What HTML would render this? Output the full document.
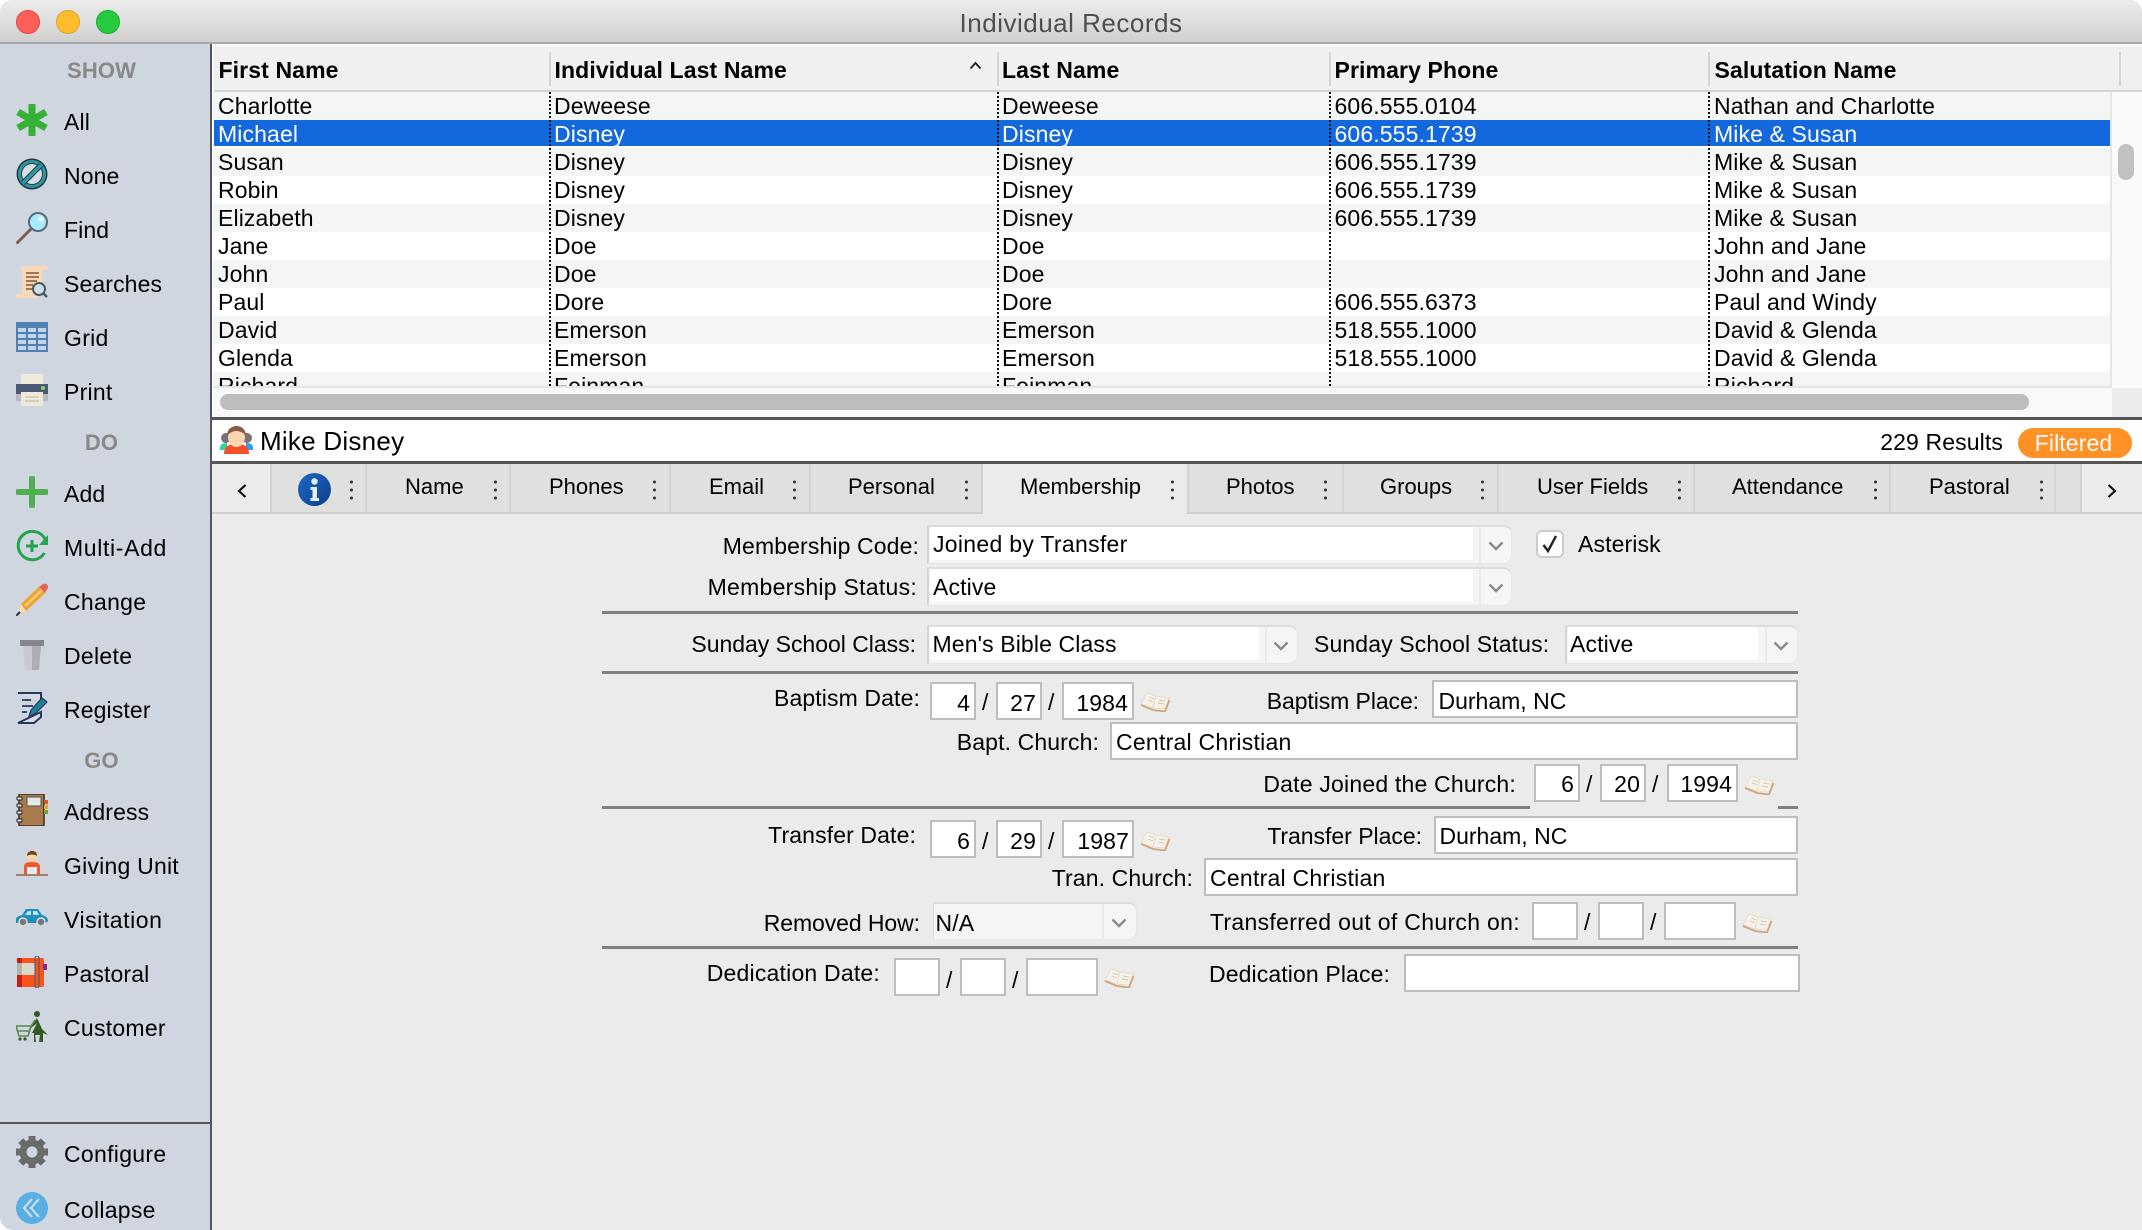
<!DOCTYPE html>
<html><head><meta charset="utf-8"><title>Individual Records</title>
<style>
html,body{margin:0;padding:0;background:#fff}
body{width:2142px;height:1230px;position:relative;overflow:hidden;font-family:"Liberation Sans",sans-serif;font-size:23px;color:#000;letter-spacing:.12px}
div,span,svg{position:absolute;box-sizing:border-box}
.t{white-space:nowrap;line-height:28px;height:28px}
.sh{width:212px;left:0;text-align:center;padding-right:9px;font-weight:700;font-size:22px;color:#888;line-height:28px;height:28px}
.row{left:214px;width:1896px;height:28px;line-height:28px;white-space:nowrap;overflow:hidden}
.row span{top:0}
.g{background:#f4f6f5}.w{background:#fff}
.sel{background:#1368dd;color:#fff;height:26px}
.c1{left:4px}.c2{left:340px}.c3{left:788px}.c4{left:1120.500px}.c5{left:1500px}
.hd{top:56px;line-height:28px;font-weight:700;white-space:nowrap}
.vd{top:52px;height:34px;width:2px;background:#d5d5d5}
.dt{top:92px;height:294px;width:2px;background:repeating-linear-gradient(#111 0 2px,transparent 2px 4px);z-index:3}
.tab{top:464px;height:48px;background:#e0e0e0;border-right:2px solid #d2d2d2}
.tt{top:472px;font-size:22px;line-height:28px;white-space:nowrap;letter-spacing:0}
.dots{top:478px;width:3px;height:24px;background:radial-gradient(circle,#333 1.3px,transparent 1.7px) 0 0/3px 8px repeat-y}
.inp{background:#fff;border:2px solid #bdbdbd}
.hl{left:602px;width:1196px;height:3px;background:#808080}
.combo{background:#f5f5f5;border-top:2px solid #ddd;border-left:2px solid #d4d4d4;border-right:1px solid #e6e6e6;border-bottom:1px solid #e6e6e6;border-radius:0 9px 9px 0}
.in{background:#fff}
.sep{width:2px;background:#eaeaea}
</style></head>
<body>
<svg width="0" height="0" style="left:0;top:0"><defs><symbol id="bk" viewBox="0 0 30 20"><path d="M1 12L7 1L16 4L13 16Z" fill="#f6f2e8" stroke="#e3dacb" stroke-width=".8"/><path d="M16 4L29 6L25 17L13 16Z" fill="#f6f2e8" stroke="#e3dacb" stroke-width=".8"/><path d="M9 5L14 7M8 8L13 10M19 8L25 9M18 11L24 12" stroke="#cfc8ba" stroke-width=".9"/><path d="M1 13L13 18L25 19.500L29.500 8" fill="none" stroke="#cfa67f" stroke-width="1.800"/></symbol></defs></svg>
<!-- window bg -->
<div style="left:0;top:0;width:2142px;height:1230px;background:#ebebeb;border-radius:12px 12px 0 12px;overflow:hidden"></div>
<!-- title -->
<div style="left:0;top:0;width:2142px;height:44px;background:linear-gradient(#ececec,#d0d0d0);border-bottom:2px solid #aaa;border-radius:12px 12px 0 0"></div>
<div style="left:16px;top:10px;width:24px;height:24px;border-radius:50%;background:#ff5f57;border:1px solid #e0443e"></div>
<div style="left:56px;top:10px;width:24px;height:24px;border-radius:50%;background:#ffbd2e;border:1px solid #dea123"></div>
<div style="left:96px;top:10px;width:24px;height:24px;border-radius:50%;background:#27c93f;border:1px solid #1aab29"></div>
<div class="t" style="left:0;width:2142px;text-align:center;top:9px;font-size:26px;color:#4e4e4e;letter-spacing:.5px">Individual Records</div>

<!-- sidebar -->
<div style="left:0;top:44px;width:212px;height:1186px;background:#cfd6df;border-right:2px solid #555;border-radius:0 0 0 14px"></div>
<div class="sh" style="top:56.500px">SHOW</div>
<div class="sh" style="top:428.500px">DO</div>
<div class="sh" style="top:746.500px">GO</div>
<div style="left:0;top:1122px;width:210px;height:2px;background:#555"></div>
<div class="t" style="left:64px;top:108px">All</div>
<div class="t" style="left:64px;top:162px">None</div>
<div class="t" style="left:64px;top:216px">Find</div>
<div class="t" style="left:64px;top:270px">Searches</div>
<div class="t" style="left:64px;top:324px;letter-spacing:.3px">Grid</div>
<div class="t" style="left:64px;top:378px;letter-spacing:.25px">Print</div>
<div class="t" style="left:64px;top:480px">Add</div>
<div class="t" style="left:64px;top:534px;letter-spacing:.65px">Multi-Add</div>
<div class="t" style="left:64px;top:588px;letter-spacing:.3px">Change</div>
<div class="t" style="left:64px;top:642px;letter-spacing:.3px">Delete</div>
<div class="t" style="left:64px;top:696px">Register</div>
<div class="t" style="left:64px;top:798px">Address</div>
<div class="t" style="left:64px;top:852px;letter-spacing:.22px">Giving Unit</div>
<div class="t" style="left:64px;top:906px;letter-spacing:.55px">Visitation</div>
<div class="t" style="left:64px;top:960px">Pastoral</div>
<div class="t" style="left:64px;top:1014px;letter-spacing:.27px">Customer</div>
<div class="t" style="left:64px;top:1140px;letter-spacing:.3px">Configure</div>
<div class="t" style="left:64px;top:1196px;letter-spacing:.27px">Collapse</div>

<!-- All -->
<svg style="left:16px;top:104px" width="32" height="32" viewBox="0 0 32 32"><path d="M16 0V32M2 8L30 24M2 24L30 8" stroke="#36b036" stroke-width="7"/></svg>
<!-- None -->
<svg style="left:16px;top:158px" width="32" height="32" viewBox="0 0 32 32"><circle cx="16" cy="16" r="15.500" fill="#1f3c44"/><circle cx="16" cy="16" r="14" fill="#2d96a3"/><circle cx="16" cy="16" r="11" fill="#1f3c44"/><circle cx="16" cy="16" r="10" fill="#d6dde3"/><path d="M7 25L25 7" stroke="#1f3c44" stroke-width="5.500"/><path d="M7 25L25 7" stroke="#2d96a3" stroke-width="3.500"/></svg>
<!-- Find -->
<svg style="left:16px;top:212px" width="32" height="32" viewBox="0 0 32 32"><path d="M1.500 30.500L15 17" stroke="#7d5a56" stroke-width="3" stroke-linecap="round"/><circle cx="22" cy="10" r="9" fill="#a7ecfc" stroke="#596a7a" stroke-width="2"/><circle cx="25" cy="7" r="2.500" fill="#fff"/></svg>
<!-- Searches -->
<svg style="left:16px;top:266px" width="32" height="32" viewBox="0 0 32 32"><path d="M6 0H32V4H26V26C24 30 22 32 20 32H0V28H6Z" fill="#f6d9b5"/><path d="M10 7H23M10 11H23M10 15H21M10 19H17M10 23H16" stroke="#8a5238" stroke-width="1.600"/><circle cx="23" cy="23" r="6" fill="#cfe0ea" stroke="#4c5a64" stroke-width="2"/><path d="M27 27L31 31" stroke="#4c5a64" stroke-width="2.400"/></svg>
<!-- Grid -->
<svg style="left:16px;top:322px" width="32" height="30" viewBox="0 0 32 30"><rect width="32" height="30" fill="#5180b5"/><g fill="#c3d4e6"><rect x="2" y="6" width="8" height="4"/><rect x="12" y="6" width="8" height="4"/><rect x="22" y="6" width="8" height="4"/><rect x="2" y="12" width="8" height="4"/><rect x="12" y="12" width="8" height="4"/><rect x="22" y="12" width="8" height="4"/><rect x="2" y="18" width="8" height="4"/><rect x="12" y="18" width="8" height="4"/><rect x="22" y="18" width="8" height="4"/><rect x="2" y="24" width="8" height="4"/><rect x="12" y="24" width="8" height="4"/><rect x="22" y="24" width="8" height="4"/></g></svg>
<!-- Print -->
<svg style="left:16px;top:374px" width="32" height="32" viewBox="0 0 32 32"><rect x="5" y="0" width="22" height="11" fill="#efe9da"/><rect x="0" y="10" width="32" height="10" fill="#4c5a74"/><rect x="0" y="20" width="32" height="7" fill="#b4bac2"/><rect x="5" y="18" width="22" height="14" fill="#efe9da"/><path d="M9 23H23M9 27H23" stroke="#cfc7b0" stroke-width="1.400"/><circle cx="27" cy="14" r="2" fill="#8fd070"/></svg>
<!-- Add -->
<svg style="left:16px;top:476px" width="32" height="32" viewBox="0 0 32 32"><path d="M16 2V30M2 16H30" stroke="#4fae50" stroke-width="6" stroke-linecap="round"/></svg>
<!-- Multi-Add -->
<svg style="left:16px;top:530px" width="32" height="32" viewBox="0 0 32 32"><path d="M29 9A14.200 14.200 0 1 0 28.500 23" fill="none" stroke="#23a34e" stroke-width="3"/><path d="M32 5V15H23Z" fill="#23a34e"/><path d="M16 10V22M10 16H22" stroke="#23a34e" stroke-width="3"/></svg>
<!-- Change -->
<svg style="left:16px;top:583px" width="32" height="33" viewBox="0 0 32 33"><path d="M5 21L23 4L29 10L10 28L2 31Z" fill="#f3a128"/><path d="M9 23L26 7" stroke="#fad07d" stroke-width="2.500"/><path d="M23 4L27 1C29 0 31 1 32 3C32 5 32 6 30 8L29 10Z" fill="#e0665a"/><path d="M5 21L10 28L2 31Z" fill="#f3e0b8"/><path d="M0 33L4 29" stroke="#333" stroke-width="2"/></svg>
<!-- Delete -->
<svg style="left:20px;top:638px" width="24" height="32" viewBox="0 0 24 32"><path d="M3 8H21L19 32H5Z" fill="#c9c9cf"/><path d="M12 8H21L19 32H12Z" fill="#aeadb3"/><rect x="0" y="2" width="24" height="6" fill="#85858c"/></svg>
<!-- Register -->
<svg style="left:16px;top:692px" width="32" height="32" viewBox="0 0 32 32"><path d="M2 1H25V8M25 20V25L18 31H2Z" fill="#d6dde5" stroke="#28395c" stroke-width="2"/><path d="M6 8H15M6 14H17M6 20H11" stroke="#28395c" stroke-width="1.800"/><path d="M13 24L15 18L26 6L31 10L19 22Z" fill="#1d7f96" stroke="#28395c" stroke-width="1.200"/></svg>
<!-- Address -->
<svg style="left:16px;top:794px" width="32" height="32" viewBox="0 0 32 32"><rect x="3" y="0" width="25" height="32" rx="1" fill="#a97a4c" stroke="#3a2c20" stroke-width="1.500"/><rect x="11" y="3" width="14" height="9" fill="#e6e8e8" stroke="#555" stroke-width="1"/><g fill="#fff" stroke="#333" stroke-width="1.200"><rect x="1" y="3" width="5" height="3" rx="1"/><rect x="1" y="10" width="5" height="3" rx="1"/><rect x="1" y="17" width="5" height="3" rx="1"/><rect x="1" y="25" width="5" height="3" rx="1"/></g><rect x="28" y="6" width="4" height="4" fill="#d8582c"/><rect x="28" y="11" width="4" height="4" fill="#e8a42c"/><rect x="28" y="16" width="4" height="4" fill="#70a33a"/></svg>
<!-- Giving -->
<svg style="left:16px;top:851px" width="32" height="26" viewBox="0 0 32 26"><path d="M8 23V16C8 12 11 11 16 11C21 11 24 12 24 16V23Z" fill="#ef5a2a"/><circle cx="16" cy="6" r="5" fill="#fcd3a6"/><path d="M11 5C11 1 14 0 16 0C19 0 21 1 21 5C18 3 14 3 11 5Z" fill="#6b4326"/><rect x="11" y="16" width="10" height="7" fill="#e8e8ee"/><rect x="0" y="23" width="32" height="2" fill="#a67c6c"/></svg>
<!-- Visitation -->
<svg style="left:16px;top:909px" width="32" height="18" viewBox="0 0 32 18"><path d="M0 10C0 8 3 7 6 6L10 0H22L26 6C29 7 32 8 32 12L30 14H0Z" fill="#1e8fbb"/><path d="M9 6L12 2H15V6ZM17 2H21L23 6H17Z" fill="#bde6f4"/><circle cx="7" cy="13" r="4" fill="#777" stroke="#ddd" stroke-width="1.500"/><circle cx="25" cy="13" r="4" fill="#777" stroke="#ddd" stroke-width="1.500"/></svg>
<!-- Pastoral -->
<svg style="left:17px;top:956px" width="31" height="32" viewBox="0 0 31 32"><rect x="0" y="2" width="27" height="29" rx="2" fill="#f9541c"/><rect x="0" y="19" width="5" height="12" fill="#c41f12"/><rect x="0" y="2" width="5" height="5" fill="#c41f12"/><rect x="0" y="7" width="5" height="12" fill="#b5b5ae"/><rect x="5" y="7" width="13" height="12" fill="#dcd8cc"/><rect x="18" y="0" width="4" height="32" rx="2" fill="none" stroke="#3c5a70" stroke-width="1"/><rect x="26" y="8" width="4" height="6" fill="#8b2a88"/></svg>
<!-- Customer -->
<svg style="left:16px;top:1011px" width="32" height="31" viewBox="0 0 32 31"><circle cx="21" cy="3" r="3" fill="#2f5a24"/><path d="M21 7L26 18L32 24L27 22V31H23L24 24H19L20 31H18V22L16 22L21 12L14 18Z" fill="#2f5a24"/><path d="M0 15H15L12 25H3Z" fill="none" stroke="#5a8a50" stroke-width="1.600"/><path d="M2 20H13M15 15L19 9" stroke="#5a8a50" stroke-width="1.400"/><circle cx="4" cy="28" r="1.600" fill="#2f5a24"/><circle cx="9" cy="28" r="1.600" fill="#2f5a24"/></svg>
<!-- Configure -->
<svg style="left:16px;top:1136px" width="32" height="32" viewBox="0 0 32 32"><path d="M16 5V0M16 32V27M5 16H0M32 16H27M8.200 8.200L4.700 4.700M27.300 27.300L23.800 23.800M8.200 23.800L4.700 27.300M27.300 4.700L23.800 8.200" stroke="#6b6b6b" stroke-width="7"/><circle cx="16" cy="16" r="9" fill="none" stroke="#6b6b6b" stroke-width="7"/></svg>
<!-- Collapse -->
<svg style="left:16px;top:1192px" width="32" height="32" viewBox="0 0 32 32"><circle cx="16" cy="16" r="16" fill="#59aee3"/><path d="M16 7L8 16L16 25M23 7L15 16L23 25" fill="none" stroke="#cfe6f6" stroke-width="2"/></svg>

<!-- table -->
<div style="left:212px;top:44px;width:1930px;height:373px;background:#fafafa"></div>
<div style="left:214px;top:46px;width:1928px;height:44px;background:#f0f0f0"></div>
<div style="left:214px;top:90px;width:1928px;height:2px;background:#d4d4d4"></div>
<div class="hd" style="left:218.500px">First Name</div>
<div class="hd" style="left:554.500px">Individual Last Name</div>
<div class="hd" style="left:1002px">Last Name</div>
<div class="hd" style="left:1334.500px">Primary Phone</div>
<div class="hd" style="left:1714.500px">Salutation Name</div>
<div class="vd" style="left:549px"></div><div class="vd" style="left:997px"></div><div class="vd" style="left:1329px"></div><div class="vd" style="left:1708px"></div><div class="vd" style="left:2119px"></div>
<svg style="left:969px;top:61px" width="13" height="9" viewBox="0 0 13 9"><path d="M1.500 7.500L6.500 2L11.500 7.500" fill="none" stroke="#222" stroke-width="1.800"/></svg>

<div class="row g" style="top:92px"><span class="c1">Charlotte</span><span class="c2">Deweese</span><span class="c3">Deweese</span><span class="c4">606.555.0104</span><span class="c5">Nathan and Charlotte</span></div>
<div class="row w" style="top:120px"></div>
<div class="row sel" style="top:120px;line-height:28px"><span class="c1">Michael</span><span class="c2">Disney</span><span class="c3">Disney</span><span class="c4">606.555.1739</span><span class="c5">Mike &amp; Susan</span></div>
<div class="row g" style="top:148px"><span class="c1">Susan</span><span class="c2">Disney</span><span class="c3">Disney</span><span class="c4">606.555.1739</span><span class="c5">Mike &amp; Susan</span></div>
<div class="row w" style="top:176px"><span class="c1">Robin</span><span class="c2">Disney</span><span class="c3">Disney</span><span class="c4">606.555.1739</span><span class="c5">Mike &amp; Susan</span></div>
<div class="row g" style="top:204px"><span class="c1">Elizabeth</span><span class="c2">Disney</span><span class="c3">Disney</span><span class="c4">606.555.1739</span><span class="c5">Mike &amp; Susan</span></div>
<div class="row w" style="top:232px"><span class="c1">Jane</span><span class="c2">Doe</span><span class="c3">Doe</span><span class="c5">John and Jane</span></div>
<div class="row g" style="top:260px"><span class="c1">John</span><span class="c2">Doe</span><span class="c3">Doe</span><span class="c5">John and Jane</span></div>
<div class="row w" style="top:288px"><span class="c1">Paul</span><span class="c2">Dore</span><span class="c3">Dore</span><span class="c4">606.555.6373</span><span class="c5">Paul and Windy</span></div>
<div class="row g" style="top:316px"><span class="c1">David</span><span class="c2">Emerson</span><span class="c3">Emerson</span><span class="c4">518.555.1000</span><span class="c5">David &amp; Glenda</span></div>
<div class="row w" style="top:344px"><span class="c1">Glenda</span><span class="c2">Emerson</span><span class="c3">Emerson</span><span class="c4">518.555.1000</span><span class="c5">David &amp; Glenda</span></div>
<div class="row g" style="top:372px;height:14px"><span class="c1">Richard</span><span class="c2">Feinman</span><span class="c3">Feinman</span><span class="c5">Richard</span></div>
<div class="dt" style="left:549px"></div><div class="dt" style="left:997px"></div><div class="dt" style="left:1329px"></div><div class="dt" style="left:1708px"></div>
<div style="left:214px;top:386px;width:1898px;height:2px;background:#e6e6e6"></div>
<div style="left:2110px;top:92px;width:2px;height:296px;background:#e6e6e6"></div>
<div style="left:2112px;top:92px;width:30px;height:296px;background:#fafafa"></div>
<div style="left:2118px;top:144px;width:16px;height:36px;border-radius:8px;background:#c1c1c1"></div>
<div style="left:214px;top:388px;width:1898px;height:29px;background:#f9f9f9"></div>
<div style="left:2112px;top:388px;width:30px;height:29px;background:#ebebeb"></div>
<div style="left:220px;top:394px;width:1809px;height:16px;border-radius:8px;background:#bdbdbd"></div>
<div style="left:212px;top:417px;width:1930px;height:3px;background:#555"></div>

<!-- detail bar -->
<div style="left:212px;top:420px;width:1930px;height:41px;background:#fff"></div>
<svg style="left:220px;top:426px" width="33" height="29" viewBox="0 0 33 29"><circle cx="6" cy="12" r="5" fill="#7b6f78"/><circle cx="27" cy="12" r="5" fill="#7b6f78"/><path d="M0 22C0 18 3 17 7 17V24H0Z" fill="#2fd69a"/><path d="M33 22C33 18 30 17 26 17V24H33Z" fill="#2c9ff0"/><path d="M4 28C4 20 9 18 16.500 18C24 18 29 20 29 28Z" fill="#f4502a"/><ellipse cx="16.500" cy="11" rx="8.500" ry="10" fill="#fcd6ac"/><path d="M7 10C7 3 12 0 16.500 0C21 0 26 3 26 10C23 6 19 5 16.500 5C14 5 10 6 7 10Z" fill="#8a5a48"/></svg>
<div class="t" style="left:260px;top:427px;font-size:26px;letter-spacing:.25px">Mike Disney</div>
<div class="t" style="right:139px;top:428px">229 Results</div>
<div style="left:2018px;top:428px;width:114px;height:30px;border-radius:15px;background:#ff9126;color:#fff;text-align:center;line-height:30px;padding-right:3px">Filtered</div>
<div style="left:212px;top:461px;width:1930px;height:3px;background:#555"></div>

<!-- tabs -->
<div style="left:212px;top:464px;width:1930px;height:50px;background:#e0e0e0;border-bottom:2px solid #d0d0d0"></div>
<div class="tab" style="left:212px;width:60px;background:#ebebeb"></div>
<div class="tab" style="left:272px;width:95px"></div>
<div class="tab" style="left:367px;width:144px"></div>
<div class="tab" style="left:511px;width:160px"></div>
<div class="tab" style="left:671px;width:140px"></div>
<div class="tab" style="left:811px;width:172px"></div>
<div class="tab" style="left:983px;width:206px;height:50px;background:#ebebeb;border-right:2px solid #d2d2d2"></div>
<div class="tab" style="left:1189px;width:155px"></div>
<div class="tab" style="left:1344px;width:155px"></div>
<div class="tab" style="left:1499px;width:196px"></div>
<div class="tab" style="left:1695px;width:196px"></div>
<div class="tab" style="left:1891px;width:165px"></div>
<div class="tab" style="left:2056px;width:26px"></div>
<div class="tab" style="left:2082px;width:60px;background:#ebebeb;border-right:0"></div>
<svg style="left:236px;top:483px" width="12" height="16" viewBox="0 0 12 16"><path d="M9.500 2L3 8L9.500 14" fill="none" stroke="#111" stroke-width="2.200"/></svg>
<svg style="left:2106px;top:483px" width="12" height="16" viewBox="0 0 12 16"><path d="M2.500 2L9 8L2.500 14" fill="none" stroke="#111" stroke-width="2.200"/></svg>
<svg style="left:298px;top:473px" width="33" height="33" viewBox="0 0 33 33"><defs><linearGradient id="ib" x1="0" y1="0" x2="1" y2="1"><stop offset="0" stop-color="#1f67c4"/><stop offset="1" stop-color="#0c3f8c"/></linearGradient></defs><circle cx="16.500" cy="16.500" r="16.500" fill="url(#ib)"/><circle cx="16.500" cy="8.500" r="3.200" fill="#e4eef8"/><path d="M12.500 14H19V25H21V28H12.500V25H14.500V17H12.500Z" fill="#e4eef8"/></svg>
<div class="dots" style="left:350px"></div><div class="dots" style="left:494px"></div><div class="dots" style="left:653px"></div><div class="dots" style="left:793px"></div><div class="dots" style="left:965px"></div><div class="dots" style="left:1171px"></div><div class="dots" style="left:1324px"></div><div class="dots" style="left:1481px"></div><div class="dots" style="left:1678px"></div><div class="dots" style="left:1874px"></div><div class="dots" style="left:2040px"></div>
<div class="tt" style="left:405px;top:472.500px">Name</div><div class="tt" style="left:549px;top:472.500px">Phones</div><div class="tt" style="left:709px;top:472.500px">Email</div><div class="tt" style="left:848px;top:472.500px">Personal</div><div class="tt" style="left:1020px;top:472.500px">Membership</div><div class="tt" style="left:1226px;top:472.500px">Photos</div><div class="tt" style="left:1380px;top:472.500px">Groups</div><div class="tt" style="left:1537px;top:472.500px">User Fields</div><div class="tt" style="left:1732px;top:472.500px">Attendance</div><div class="tt" style="left:1929px;top:472.500px">Pastoral</div>

<!-- form -->
<div class="t" style="right:1223px;top:532px">Membership Code:</div>
<div class="combo" style="left:927px;top:525px;width:585px;height:39px"></div>
<div class="in" style="left:930px;top:527px;width:543px;height:33px"></div>
<div class="sep" style="left:1479px;top:527px;height:37px"></div>
<svg style="left:1488px;top:541px" width="16" height="10" viewBox="0 0 16 10"><path d="M1.500 1.500L8 8L14.500 1.500" fill="none" stroke="#8a8a8a" stroke-width="2.400"/></svg>
<div class="t" style="left:933px;top:530px;letter-spacing:.3px">Joined by Transfer</div>
<div class="inp" style="left:1536px;top:530px;width:28px;height:28px;border-radius:6px;border-color:#ccc"></div>
<svg style="left:1541px;top:534px" width="18" height="20" viewBox="0 0 18 20"><path d="M2.500 11L7 17L15 2" fill="none" stroke="#222" stroke-width="2.400"/></svg>
<div class="t" style="left:1578px;top:530px">Asterisk</div>

<div class="t" style="right:1225px;top:572.500px;letter-spacing:.27px">Membership Status:</div>
<div class="combo" style="left:927px;top:567px;width:585px;height:39px"></div>
<div class="in" style="left:930px;top:569px;width:543px;height:33px"></div>
<div class="sep" style="left:1479px;top:569px;height:37px"></div>
<svg style="left:1488px;top:583px" width="16" height="10" viewBox="0 0 16 10"><path d="M1.500 1.500L8 8L14.500 1.500" fill="none" stroke="#8a8a8a" stroke-width="2.400"/></svg>
<div class="t" style="left:933px;top:572.500px">Active</div>
<div class="hl" style="top:611px"></div>

<div class="t" style="right:1226px;top:630px;letter-spacing:-.02px">Sunday School Class:</div>
<div class="combo" style="left:927px;top:625px;width:371px;height:39px"></div>
<div class="in" style="left:930px;top:627px;width:329px;height:33px"></div>
<div class="sep" style="left:1265px;top:627px;height:37px"></div>
<svg style="left:1273px;top:641px" width="16" height="10" viewBox="0 0 16 10"><path d="M1.500 1.500L8 8L14.500 1.500" fill="none" stroke="#8a8a8a" stroke-width="2.400"/></svg>
<div class="t" style="left:932.500px;top:630px">Men's Bible Class</div>
<div class="t" style="left:1314px;top:630px">Sunday School Status:</div>
<div class="combo" style="left:1565px;top:625px;width:233px;height:39px"></div>
<div class="in" style="left:1568px;top:627px;width:190px;height:33px"></div>
<div class="sep" style="left:1765px;top:627px;height:37px"></div>
<svg style="left:1773px;top:641px" width="16" height="10" viewBox="0 0 16 10"><path d="M1.500 1.500L8 8L14.500 1.500" fill="none" stroke="#8a8a8a" stroke-width="2.400"/></svg>
<div class="t" style="left:1570px;top:630px">Active</div>
<div class="hl" style="top:671px"></div>

<div class="t" style="right:1222px;top:684px">Baptism Date:</div>
<div class="inp" style="left:930px;top:682px;width:46px;height:38px"></div>
<div class="inp" style="left:996px;top:682px;width:46px;height:38px"></div>
<div class="inp" style="left:1062px;top:682px;width:72px;height:38px"></div>
<div class="t" style="left:982px;top:688px">/</div><div class="t" style="left:1048px;top:688px">/</div>
<div class="t" style="right:1172px;top:688.500px">4</div><div class="t" style="right:1106px;top:688.500px">27</div><div class="t" style="right:1014px;top:688.500px">1984</div>
<svg style="left:1140px;top:692px" width="30" height="20"><use href="#bk"/></svg>
<div class="t" style="right:723px;top:686.500px;letter-spacing:-.08px">Baptism Place:</div>
<div class="inp" style="left:1432px;top:680px;width:366px;height:38px"></div>
<div class="t" style="left:1438.500px;top:686.500px;letter-spacing:0">Durham, NC</div>

<div class="t" style="right:1043px;top:728px">Bapt. Church:</div>
<div class="inp" style="left:1110px;top:722px;width:688px;height:38px"></div>
<div class="t" style="left:1116px;top:728px;letter-spacing:.25px">Central Christian</div>

<div class="hl" style="top:806px"></div>
<div style="left:1530px;top:804px;width:248px;height:5px;background:#ebebeb"></div>
<div class="t" style="right:626px;top:770px;letter-spacing:.2px">Date Joined the Church:</div>
<div class="inp" style="left:1534px;top:764px;width:46px;height:38px"></div>
<div class="inp" style="left:1600px;top:764px;width:46px;height:38px"></div>
<div class="inp" style="left:1667px;top:764px;width:71px;height:38px"></div>
<div class="t" style="left:1586px;top:770px">/</div><div class="t" style="left:1652px;top:770px">/</div>
<div class="t" style="right:568px;top:770px">6</div><div class="t" style="right:502px;top:770px">20</div><div class="t" style="right:410px;top:770px">1994</div>
<svg style="left:1744px;top:775px" width="30" height="20"><use href="#bk"/></svg>

<div class="t" style="right:1226px;top:821px">Transfer Date:</div>
<div class="inp" style="left:930px;top:820px;width:46px;height:38px"></div>
<div class="inp" style="left:996px;top:820px;width:46px;height:38px"></div>
<div class="inp" style="left:1062px;top:820px;width:72px;height:38px"></div>
<div class="t" style="left:982px;top:827px">/</div><div class="t" style="left:1048px;top:827px">/</div>
<div class="t" style="right:1172px;top:827px">6</div><div class="t" style="right:1106px;top:827px">29</div><div class="t" style="right:1013px;top:827px">1987</div>
<svg style="left:1140px;top:831px" width="30" height="20"><use href="#bk"/></svg>
<div class="t" style="right:720px;top:822px;letter-spacing:-.02px">Transfer Place:</div>
<div class="inp" style="left:1434px;top:816px;width:364px;height:38px"></div>
<div class="t" style="left:1439.500px;top:822px;letter-spacing:0">Durham, NC</div>

<div class="t" style="right:949px;top:864px">Tran. Church:</div>
<div class="inp" style="left:1204px;top:858px;width:594px;height:38px"></div>
<div class="t" style="left:1210px;top:864px;letter-spacing:.25px">Central Christian</div>

<div class="t" style="right:1222px;top:908.500px;letter-spacing:-.08px">Removed How:</div>
<div class="combo" style="left:933px;top:902px;width:204px;height:38px;border-left:1px solid #ddd"></div>
<div class="sep" style="left:1102px;top:904px;height:36px"></div>
<svg style="left:1111px;top:918px" width="16" height="10" viewBox="0 0 16 10"><path d="M1.500 1.500L8 8L14.500 1.500" fill="none" stroke="#8a8a8a" stroke-width="2.400"/></svg>
<div class="t" style="left:935.500px;top:908.500px">N/A</div>
<div class="t" style="right:622px;top:908px;letter-spacing:.32px">Transferred out of Church on:</div>
<div class="inp" style="left:1532px;top:902px;width:46px;height:38px"></div>
<div class="inp" style="left:1598px;top:902px;width:46px;height:38px"></div>
<div class="inp" style="left:1664px;top:902px;width:72px;height:38px"></div>
<div class="t" style="left:1584px;top:908px">/</div><div class="t" style="left:1650px;top:908px">/</div>
<svg style="left:1742px;top:913px" width="30" height="20"><use href="#bk"/></svg>
<div class="hl" style="top:946px"></div>

<div class="t" style="right:1262px;top:958.500px;letter-spacing:.2px">Dedication Date:</div>
<div class="inp" style="left:894px;top:958px;width:46px;height:38px"></div>
<div class="inp" style="left:960px;top:958px;width:46px;height:38px"></div>
<div class="inp" style="left:1026px;top:958px;width:72px;height:38px"></div>
<div class="t" style="left:946px;top:966px">/</div><div class="t" style="left:1012px;top:966px">/</div>
<svg style="left:1104px;top:968px" width="30" height="20"><use href="#bk"/></svg>
<div class="t" style="right:752px;top:960px">Dedication Place:</div>
<div class="inp" style="left:1404px;top:954px;width:396px;height:38px"></div>
</body></html>
